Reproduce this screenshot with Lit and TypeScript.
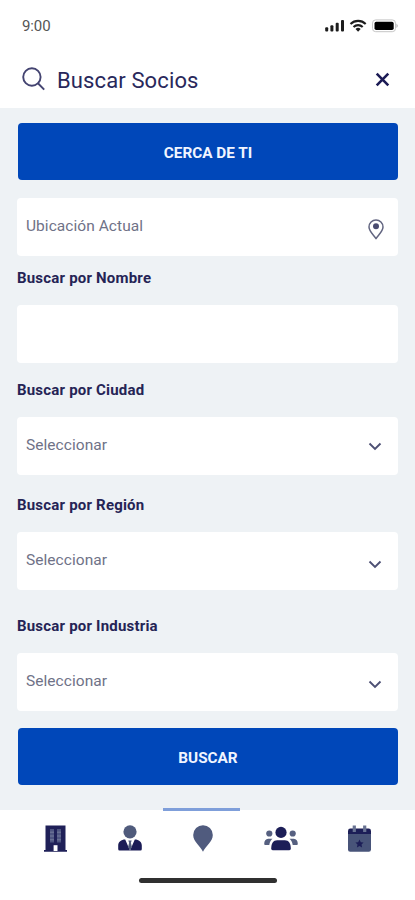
import { LitElement, html, css } from "lit";
import { customElement, property } from "lit/decorators.js";

@customElement("search-field")
class SearchField extends LitElement {
  @property() label = "";
  @property() placeholder = "";
  @property() icon = "";

  static styles = css`
    :host { display: block; }
    .label {
      display: block;
      height: 20px;
      line-height: 20px;
      margin-bottom: var(--label-gap, 17px);
      font-size: 15px;
      font-weight: 700;
      letter-spacing: 0.2px;
      color: #252455;
      white-space: nowrap;
    }
    .box {
      display: flex;
      align-items: center;
      justify-content: space-between;
      box-sizing: border-box;
      height: 58px;
      padding: 0 14px 0 9px;
      background: #fff;
      border-radius: 4px;
    }
    .value {
      color: #6f7287;
      font-size: 15.5px;
      line-height: 20px;
      letter-spacing: 0.05px;
      margin-bottom: 2px;
    }
    svg { display: block; }
    .pin { margin-top: 5px; }
    .chevron { margin: var(--chevron-top, 0px) 2px 0 0; }
  `;

  renderIcon() {
    if (this.icon === "pin") {
      return html`<svg class="pin" width="16" height="21" viewBox="0 0 16 21" fill="none">
        <path d="M8 19.600C6 16.200 1 12.300 1 7.900a7 7 0 0 1 14 0c0 4.400-5 8.300-7 11.700Z" stroke="#626580" stroke-width="1.500" stroke-linejoin="round"/>
        <circle cx="8" cy="7.300" r="3" fill="#4a4c70"/>
      </svg>`;
    }
    if (this.icon === "chevron") {
      return html`<svg class="chevron" width="14" height="9" viewBox="0 0 14 9" fill="none">
        <path d="M1.500 1.500 7 7l5.500-5.500" stroke="#4d5074" stroke-width="1.900"/>
      </svg>`;
    }
    return null;
  }

  render() {
    return html`
      ${this.label ? html`<span class="label">${this.label}</span>` : null}
      <div class="box">
        <span class="value">${this.placeholder}</span>
        ${this.renderIcon()}
      </div>`;
  }
}

const building = html`<svg width="23" height="27" viewBox="0 0 23 27">
  <path d="M1.500.500h20V25H23v1.700H0V25h1.500Z" fill="#1f2058"/>
  <path d="M6 4h4v13.500H6zM13 4h4v13.500h-4z" fill="#4d5480"/>
  <path d="M6 7.200h4M6 11h4M6 14.800h4M13 7.200h4M13 11h4M13 14.800h4" stroke="#747b9c" stroke-width="1"/>
  <path d="M9.600 20.200h3.900V26H9.600z" fill="#fff"/>
</svg>`;

const member = html`<svg width="24" height="26" viewBox="0 0 24 26">
  <circle cx="12" cy="6.800" r="6.600" fill="#505b7c"/>
  <path d="M7.200 14.500 12 25.500H1.500Q.2 25.500.2 24v-3.500c0-3.600 3-6 7-6ZM16.800 14.500 12 25.500h10.500q1.300 0 1.300-1.500v-3.500c0-3.600-3-6-7-6Z" fill="#1b1c56"/>
  <path d="M10.300 15.500h3.400l-.8 2.300 1 4.200L12 25.500 10.100 22l1-4.200Z" fill="#505b7c"/>
</svg>`;

const place = html`<svg width="20" height="27" viewBox="0 0 20 27">
  <path d="M10 26.700C7.500 21.300.2 16.600.2 10a9.800 9.800 0 0 1 19.600 0c0 6.600-7.300 11.300-9.800 16.700Z" fill="#505b7e"/>
</svg>`;

const group = html`<svg width="34" height="25" viewBox="0 0 34 25">
  <circle cx="17" cy="6.400" r="5.600" fill="#1c1e57"/>
  <path d="M7.200 22.800c0-5.400 2-8.600 6-8.600h7.600c4 0 6 3.200 6 8.600q0 1.400-1.500 1.400H8.700q-1.500 0-1.500-1.400Z" fill="#1c1e57"/>
  <g fill="#566080">
    <circle cx="5.300" cy="7.500" r="3.100"/><circle cx="28.700" cy="7.500" r="3.100"/>
    <path d="M.2 18c0-3 1.500-5.200 4-5.200h4.300c-1.900 1.500-2.800 3.500-3.200 6.200H1.200q-1 0-1-1ZM33.800 18c0-3-1.500-5.200-4-5.200h-4.300c1.900 1.500 2.800 3.500 3.200 6.200h4.100q1 0 1-1Z"/>
  </g>
</svg>`;

const calendar = html`<svg width="23" height="27" viewBox="0 0 23 27">
  <path d="M0 9h23v15.500q0 2.200-2.200 2.200H2.200Q0 26.700 0 24.500Z" fill="#485479"/>
  <path d="M0 9V6q0-2.400 2.400-2.400h18.200Q23 3.600 23 6v3Z" fill="#1c1e57"/>
  <path d="M4.700.5h3.200V7H4.700zM15.100.5h3.200V7h-3.200z" fill="#687292"/>
  <path d="m11.500 14.600 1.300 2.700 2.800.3-2.100 2 .6 2.900-2.600-1.500-2.600 1.500.6-2.900-2.100-2 2.800-.3Z" fill="#1c1e57"/>
</svg>`;

@customElement("app-root")
class AppRoot extends LitElement {
  static styles = css`
    :host {
      display: flex;
      flex-direction: column;
      width: 415px;
      height: 900px;
      overflow: hidden;
      background: #eef2f5;
      font-family: Roboto, "Liberation Sans", sans-serif;
    }
    svg { display: block; flex: none; }
    .status {
      display: flex;
      justify-content: space-between;
      box-sizing: border-box;
      height: 51px;
      padding: 16px 16px 0 22px;
      background: #fff;
      color: #555;
    }
    .time { font-size: 15px; line-height: 20px; letter-spacing: -0.1px; }
    .signals { margin-top: 2px; }
    .header {
      display: flex;
      align-items: center;
      box-sizing: border-box;
      height: 57px;
      padding: 0 25px 0 22px;
      background: #fff;
    }
    h1 {
      flex: 1;
      margin: 2px 0 0 12px;
      font-size: 22px;
      line-height: 28px;
      font-weight: 400;
      letter-spacing: 0.12px;
      color: #29285b;
    }
    .search { margin-top: -2px; }
    .close { margin-top: -1px; }
    form {
      display: flex;
      flex-direction: column;
      height: 702px;
      box-sizing: border-box;
      padding: 15px 17px 0;
    }
    button {
      flex: none;
      height: 57px;
      margin: 0 0 0 1px;
      padding: 3px 0 0;
      border: 0;
      border-radius: 4px;
      background: #0047b9;
      color: #f1f5ff;
      font: 700 15.300px/20px Roboto, "Liberation Sans", sans-serif;
    }
    .location { margin-top: 18px; }
    .name { margin-top: 12px; }
    .city { margin-top: 17px; }
    .region { margin-top: 20px; --chevron-top: 6px; }
    .industry { margin-top: 26px; --chevron-top: 4px; }
    .submit { margin-top: 17px; }
    .nav { flex: 1; background: #fff; }
    .active { width: 77px; height: 3px; margin: -2px 0 0 162.500px; background: #7f9fda; }
    .items { display: flex; align-items: flex-start; padding: 14px 0 0 44px; height: 56px; box-sizing: border-box; }
    .member { margin-left: 51px; }
    .place { margin-left: 50.500px; }
    .group { margin: 1px 0 0 51px; }
    .calendar { margin-left: 50.500px; }
    .home { width: 138px; height: 5px; margin: 10.500px 0 0 139px; border-radius: 3px; background: #303030; }
  `;

  render() {
    return html`
      <div class="status">
        <span class="time">9:00</span>
        <svg class="signals" width="75" height="16" viewBox="0 0 75 16">
          <g fill="#1c1c1c">
            <rect x="1.200" y="9.300" width="3" height="4.200" rx="1"/>
            <rect x="6.400" y="7.300" width="3" height="6.200" rx="1"/>
            <rect x="11.700" y="4.800" width="3" height="8.700" rx="1"/>
            <rect x="17" y="2" width="3" height="11.500" rx="1"/>
          </g>
          <g fill="none" stroke="#1c1c1c" stroke-width="2.100">
            <path d="M26.500 5.900a11 11 0 0 1 15.200 0M29.500 9a6.700 6.700 0 0 1 9.200 0"/>
          </g>
          <path d="M31.500 11a3.900 3.900 0 0 1 5.200 0l-2.600 2.700Z" fill="#1c1c1c"/>
          <rect x="48.500" y="1.900" width="23" height="11.800" rx="3.200" fill="#fff" stroke="#c6c6c6"/>
          <rect x="50.500" y="3.700" width="19.200" height="8.300" rx="1.700" fill="#000"/>
          <path d="M72.500 5.500q2.400 2.300 0 4.600Z" fill="#aaa"/>
        </svg>
      </div>
      <div class="header">
        <svg class="search" width="23" height="24" viewBox="0 0 23 24" fill="none" stroke="#444471" stroke-width="1.900">
          <circle cx="9.900" cy="10" r="8.700"/><path d="m15.700 16 6.500 6.600"/>
        </svg>
        <h1>Buscar Socios</h1>
        <svg class="close" width="15" height="15" viewBox="0 0 15 15" fill="none" stroke="#1c1b55" stroke-width="2.600">
          <path d="m1.700 1.700 11.600 11.600M13.300 1.700 1.700 13.300"/>
        </svg>
      </div>
      <form>
        <button type="button">CERCA DE TI</button>
        <search-field class="location" placeholder="Ubicación Actual" icon="pin"></search-field>
        <search-field class="name" label="Buscar por Nombre"></search-field>
        <search-field class="city" label="Buscar por Ciudad" placeholder="Seleccionar" icon="chevron"></search-field>
        <search-field class="region" label="Buscar por Región" placeholder="Seleccionar" icon="chevron"></search-field>
        <search-field class="industry" label="Buscar por Industria" placeholder="Seleccionar" icon="chevron"></search-field>
        <button class="submit" type="button">BUSCAR</button>
      </form>
      <div class="nav">
        <div class="active"></div>
        <div class="items">
          <div>${building}</div>
          <div class="member">${member}</div>
          <div class="place">${place}</div>
          <div class="group">${group}</div>
          <div class="calendar">${calendar}</div>
        </div>
        <div class="home"></div>
      </div>`;
  }
}
